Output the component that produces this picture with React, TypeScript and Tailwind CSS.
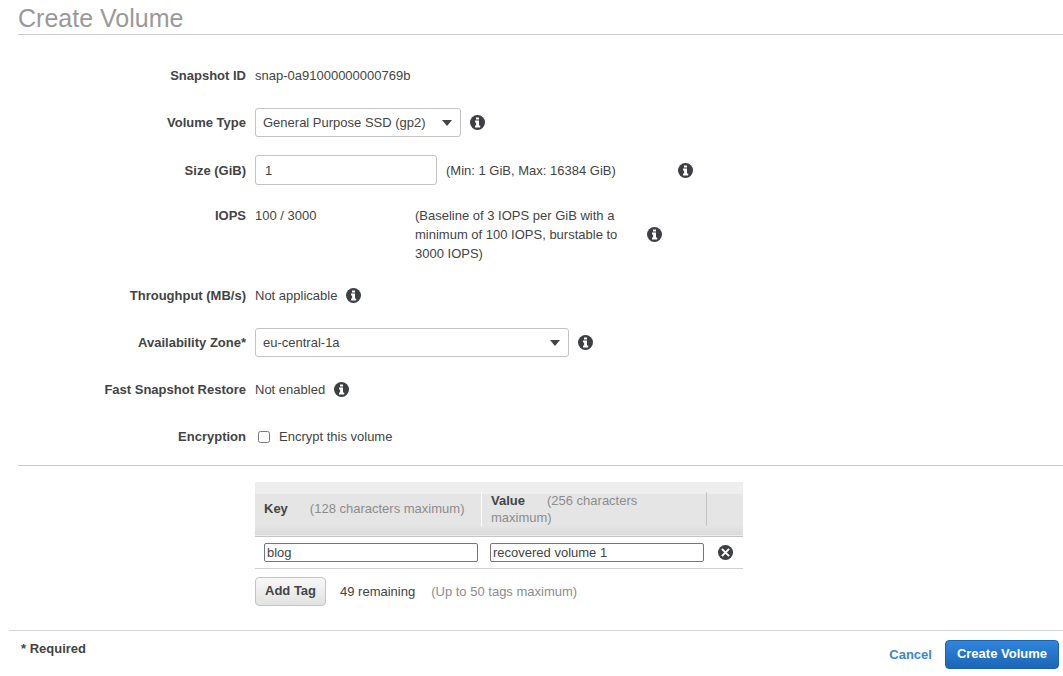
import { useState } from 'react';
import type { ReactNode } from 'react';

interface Tag {
  id: number;
  key: string;
  value: string;
}

const MAX_TAGS = 50;

function InfoIcon({ label }: { label: string }) {
  return (
    <button type="button" aria-label={label} className="h-[15px] w-[15px] shrink-0 cursor-pointer text-[#3d3f42]">
      <svg viewBox="0 0 15 15" className="block h-[15px] w-[15px]">
        <circle cx="7.5" cy="7.5" r="7.5" fill="currentColor" />
        <path d="M6 2.4h3v2.2H6zM5 5.6h4v5H10.2v1.8H5v-1.8h1.1V7.4H5z" fill="#fff" />
      </svg>
    </button>
  );
}

function RemoveIcon() {
  return (
    <svg viewBox="0 0 15 15" className="block h-[15px] w-[15px]">
      <circle cx="7.5" cy="7.5" r="7.5" fill="#3d3f42" />
      <path d="M3.9 3.9l7.2 7.2M11.1 3.9l-7.2 7.2" stroke="#fff" strokeWidth="2" />
    </svg>
  );
}

function Field({ label, htmlFor, top, children }: { label: string; htmlFor?: string; top?: boolean; children: ReactNode }) {
  const labelClass = 'w-[228px] shrink-0 text-right font-bold';
  return (
    <div className={`flex min-h-[29px] gap-[9px] ${top ? 'items-start pt-[3px]' : 'items-center'}`}>
      {htmlFor ? (
        <label htmlFor={htmlFor} className={labelClass}>{label}</label>
      ) : (
        <span className={labelClass}>{label}</span>
      )}
      {children}
    </div>
  );
}

function Select({ id, width, options }: { id: string; width: string; options: string[] }) {
  return (
    <div className={`relative ${width}`}>
      <select
        id={id}
        className="block h-[29px] w-full appearance-none rounded-[3px] border border-[#c4c4c4] bg-white pr-7 pl-[7px] focus:outline-none"
      >
        {options.map(o => (
          <option key={o}>{o}</option>
        ))}
      </select>
      <svg viewBox="0 0 10 6" className="pointer-events-none absolute top-3 right-[9px] h-[6px] w-[10px]">
        <path d="M0 0h10L5 6z" fill="#444" />
      </svg>
    </div>
  );
}

export default function App() {
  const [size, setSize] = useState('1');
  const [encrypted, setEncrypted] = useState(false);
  const [tags, setTags] = useState<Tag[]>([{ id: 1, key: 'blog', value: 'recovered volume 1' }]);

  const updateTag = (id: number, patch: Partial<Tag>) => {
    setTags(tags.map(t => (t.id === id ? { ...t, ...patch } : t)));
  };

  const addTag = () => {
    if (tags.length < MAX_TAGS) {
      setTags([...tags, { id: Date.now(), key: '', value: '' }]);
    }
  };

  const tagInput = 'block h-[19px] w-full rounded-[2px] border border-[#767676] bg-white px-[2px] focus:outline-none';

  return (
    <div className="bg-white font-['Liberation_Sans',Arial,sans-serif] text-[13px] leading-[19px] text-[#444]">
      <main className="pl-[18px]">
        <h1 className="border-b border-[#ccc] pt-[3px] pb-px text-[25px] leading-[30px] text-[#999]">Create Volume</h1>

        <div className="flex flex-col gap-[18px] border-b border-[#ccc] pt-[26px] pb-[14px]">
          <Field label="Snapshot ID">
            <span>snap-0a91000000000769b</span>
          </Field>

          <Field label="Volume Type" htmlFor="volume-type">
            <Select id="volume-type" width="w-[206px]" options={['General Purpose SSD (gp2)', 'Provisioned IOPS SSD (io1)', 'Magnetic']} />
            <InfoIcon label="About volume type" />
          </Field>

          <Field label="Size (GiB)" htmlFor="size">
            <input
              id="size"
              type="text"
              value={size}
              onChange={e => setSize(e.target.value)}
              className="h-[30px] w-[182px] rounded-[3px] border border-[#c4c4c4] px-[9px] focus:outline-none"
            />
            <span className="w-[223px]">(Min: 1 GiB, Max: 16384 GiB)</span>
            <InfoIcon label="About size" />
          </Field>

          <Field label="IOPS" top>
            <div className="flex">
              <span className="w-40">100 / 3000</span>
              <div className="flex items-center gap-[9px]">
                <p className="w-[223px]">(Baseline of 3 IOPS per GiB with a minimum of 100 IOPS, burstable to 3000 IOPS)</p>
                <InfoIcon label="About IOPS" />
              </div>
            </div>
          </Field>

          <Field label="Throughput (MB/s)">
            <span>Not applicable</span>
            <InfoIcon label="About throughput" />
          </Field>

          <Field label="Availability Zone*" htmlFor="zone">
            <Select id="zone" width="w-[314px]" options={['eu-central-1a', 'eu-central-1b', 'eu-central-1c']} />
            <InfoIcon label="About availability zone" />
          </Field>

          <Field label="Fast Snapshot Restore">
            <span>Not enabled</span>
            <InfoIcon label="About fast snapshot restore" />
          </Field>

          <Field label="Encryption">
            <label className="flex items-center gap-[9px] pl-[3px]">
              <input
                type="checkbox"
                checked={encrypted}
                onChange={e => setEncrypted(e.target.checked)}
                className="h-3 w-3"
              />
              Encrypt this volume
            </label>
          </Field>
        </div>

        {/* Tags */}
        <section className="mt-4 ml-[237px] w-[488px]">
          <table className="w-full table-fixed border-collapse text-left">
            <colgroup>
              <col className="w-[226px]" />
              <col className="w-[226px]" />
              <col />
            </colgroup>
            <thead>
              <tr className="h-[54px] border-b border-[#c4c4c4] bg-[linear-gradient(#eee_22%,#e5e5e5_22%,#e5e5e5_82%,#dadada)] leading-[17px]">
                <th className="px-[9px] font-normal">
                  <b className="mr-[22px]">Key</b>
                  <span className="text-[#8c8c8c]">(128 characters maximum)</span>
                </th>
                <th className="p-0 font-normal">
                  <div className="flex h-[34px] items-center border-r border-l border-r-[#c4c4c4] border-l-white pr-9 pl-[9px]">
                    <div>
                      <b className="mr-[22px]">Value</b>
                      <span className="text-[#8c8c8c]">(256 characters maximum)</span>
                    </div>
                  </div>
                </th>
                <th />
              </tr>
            </thead>
            <tbody>
              {tags.map(tag => (
                <tr key={tag.id} className="h-8 border-b border-[#d0d0d0]">
                  <td className="pr-[3px] pl-[9px]">
                    <input
                      aria-label="Key"
                      maxLength={128}
                      value={tag.key}
                      onChange={e => updateTag(tag.id, { key: e.target.value })}
                      className={tagInput}
                    />
                  </td>
                  <td className="pr-[3px] pl-[9px]">
                    <input
                      aria-label="Value"
                      maxLength={256}
                      value={tag.value}
                      onChange={e => updateTag(tag.id, { value: e.target.value })}
                      className={tagInput}
                    />
                  </td>
                  <td className="pl-[11px]">
                    <button
                      type="button"
                      aria-label="Remove tag"
                      onClick={() => setTags(tags.filter(t => t.id !== tag.id))}
                      className="block cursor-pointer"
                    >
                      <RemoveIcon />
                    </button>
                  </td>
                </tr>
              ))}
            </tbody>
          </table>

          <div className="mt-2 flex items-center">
            <button
              type="button"
              onClick={addTag}
              className="h-[29px] rounded-[4px] border border-[#c4c4c4] bg-linear-to-b from-[#f8f8f8] to-[#e2e2e2] px-[9px] pb-[2px] font-bold"
            >
              Add Tag
            </button>
            <span className="ml-[14px]">{MAX_TAGS - tags.length} remaining</span>
            <span className="ml-4 text-[#8c8c8c]">(Up to {MAX_TAGS} tags maximum)</span>
          </div>
        </section>
      </main>

      <footer className="mt-6 ml-[9px] flex items-start justify-between border-t border-[#d5d5d5] pt-[9px] pr-1 pl-3 leading-[17px] font-bold">
        <span>* Required</span>
        <div className="flex items-center gap-[13px]">
          <a href="#cancel" className="text-[#3d85cc]">Cancel</a>
          <button
            type="button"
            className="h-[29px] rounded-[4px] border border-[#1f62ac] bg-linear-to-b from-[#2f86dc] to-[#1c65b8] px-[11px] pb-[2px] text-white"
          >
            Create Volume
          </button>
        </div>
      </footer>
    </div>
  );
}
